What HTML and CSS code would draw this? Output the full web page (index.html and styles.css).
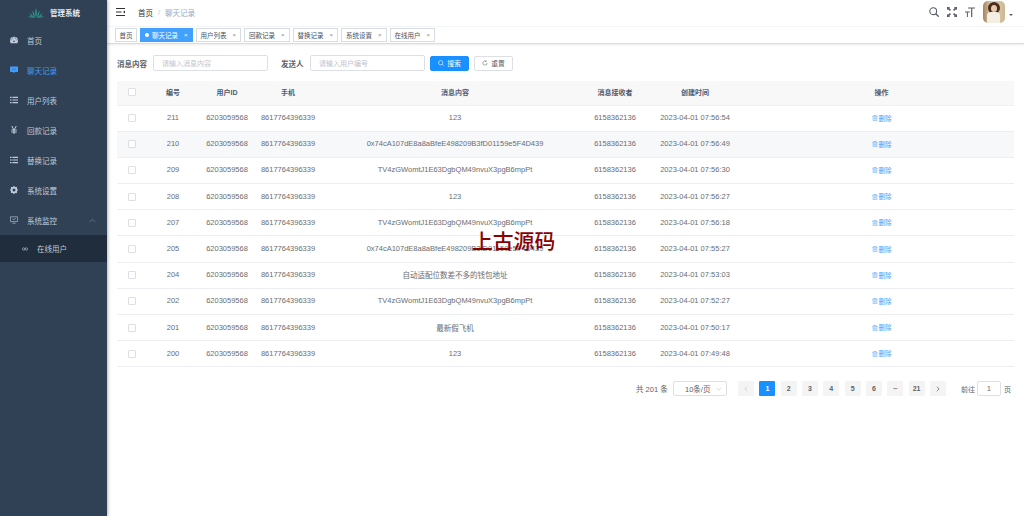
FILE: index.html
```html
<!DOCTYPE html>
<html lang="zh-CN">
<head>
<meta charset="utf-8">
<title>聊天记录</title>
<link rel="stylesheet" href="styles.css">
</head>
<body>
<svg class="defs" aria-hidden="true"><symbol id="trash" viewBox="0 0 8 8"><path d="M.5 1.500h7M3 1.500V.5h2v1M1.500 1.500v6h5v-6M3.200 3v3M4.800 3v3" fill="none" stroke="#409eff" stroke-width=".7"/></symbol></svg>
<div class="app">
  <aside class="side">
    <div class="logo">
      <svg class="logo-ico" viewBox="0 0 16 10"><path d="M8 10C7 6 7 3 8 0c1 3 1 6 0 10zM7 10C5 7 4.500 5 4.500 2.500 6 5 7 7 7 10zM9 10c2-3 2.500-5 2.500-7.500C10 5 9 7 9 10zM6.500 10C4 8.500 2.500 7.500 1 5.500c2.500 1 4.500 2.500 5.500 4.500zM9.500 10c2.500-1.500 4-2.500 5.500-4.500-2.500 1-4.500 2.500-5.500 4.500zM6 10.000C4 9.800 2 9.300 0 8c2.500 0 4.500.8 6 2zM10 10c2-.2 4-.7 6-2-2.500 0-4.500.8-6 2z"/></svg>
      <span class="logo-text">管理系统</span>
    </div>
    <nav class="menu">
      <div class="mi"><svg class="ic" viewBox="0 0 10 8"><path d="M5 0a5 5 0 0 0-5 5c0 1 .3 2 .8 3h8.400c.5-1 .8-2 .8-3a5 5 0 0 0-5-5z"/><circle cx="5" cy="5.500" r="1" fill="#304156"/><path d="M3.300 0v3M6.700 0v3M.5 3.500l2 .5M9.500 3.500l-2 .5" stroke="#304156" stroke-width=".5"/></svg><span>首页</span></div>
      <div class="mi on"><svg class="ic" viewBox="0 0 10 9"><path d="M1 0h8a1 1 0 0 1 1 1v5a1 1 0 0 1-1 1H6L5 9 4 7H1a1 1 0 0 1-1-1V1a1 1 0 0 1 1-1z"/><path d="M2.500 3.500h5" stroke="#304156" stroke-width=".8" stroke-dasharray="1 1"/></svg><span>聊天记录</span></div>
      <div class="mi"><svg class="ic" viewBox="0 0 10 8"><path d="M0 0h2v1.400H0zM3 0h7v1.400H3zM0 3.300h2v1.400H0zM3 3.300h7v1.400H3zM0 6.600h2V8H0zM3 6.600h7V8H3z"/></svg><span>用户列表</span></div>
      <div class="mi"><svg class="ic" viewBox="0 0 10 10"><path d="M1.500 0h1.400L5 4l2.100-4h1.400L6 4.500h2.500v1H5.700V7h2.800v1H5.700v2H4.300V8H1.500V7h2.800V5.500H1.500v-1H4z"/></svg><span>回款记录</span></div>
      <div class="mi"><svg class="ic" viewBox="0 0 10 8"><path d="M0 0h2v1.400H0zM3 0h7v1.400H3zM0 3.300h2v1.400H0zM3 3.300h7v1.400H3zM0 6.600h2V8H0zM3 6.600h7V8H3z"/></svg><span>替换记录</span></div>
      <div class="mi"><svg class="ic" viewBox="0 0 10 10"><circle cx="5" cy="5" r="3" fill="none" stroke="#bfcbd9" stroke-width="2.200"/><path d="M5 0v2M5 8v2M0 5h2M8 5h2M1.500 1.500l1.500 1.500M7 7l1.500 1.500M8.500 1.500L7 3M3 7L1.500 8.500" stroke="#bfcbd9" stroke-width="1.500"/></svg><span>系统设置</span></div>
      <div class="mi"><svg class="ic" viewBox="0 0 10 9"><path d="M.5.500h9v6h-9zM3 8.500h4M3.200 3l1.500 1.500L7 2" fill="none" stroke="#bfcbd9" stroke-width=".8"/></svg><span>系统监控</span><svg class="arrow" viewBox="0 0 8 5"><path d="M1 4l3-3 3 3" fill="none" stroke="#6f7f91" stroke-width=".9"/></svg></div>
      <div class="mi sub"><svg class="ic-sub" viewBox="0 0 10 6"><path d="M3 .8a2.200 2.200 0 0 0 0 4.400c1 0 1.500-.7 2-2.200S6 .8 7 .8a2.200 2.200 0 0 1 0 4.400c-1 0-1.500-.7-2-2.200S4 .8 3 .8z" fill="none" stroke="#bfcbd9" stroke-width="1"/></svg><span>在线用户</span></div>
    </nav>
  </aside>
  <main class="main">
    <header class="top">
      <svg class="ham" viewBox="0 0 9 8"><path d="M0 0h9v1.100H0zM0 3.400h5.500v1.200H0zM0 6.900h9V8H0zM9 2.500v3L7 4z"/></svg>
      <div class="crumb"><span class="c1">首页</span><span class="sep">/</span><span class="c2">聊天记录</span></div>
      <div class="tools">
        <svg class="tool" viewBox="0 0 10 10"><circle cx="4.200" cy="4.200" r="3.400" fill="none" stroke="#5a5e66" stroke-width="1.100"/><path d="M6.800 6.800L9.700 9.700" stroke="#5a5e66" stroke-width="1.300"/></svg>
        <svg class="tool" viewBox="0 0 10 10"><path d="M0 0h3L2.200 1 4 2.800 2.800 4 1 2.200 0 3zM10 0v3L9 2.200 7.200 4 6 2.800 7.800 1 7 0zM0 10V7l1 .8L2.800 6 4 7.200 2.200 9 3 10zM10 10H7l.8-1L6 7.200 7.200 6 9 7.800l1-.8z" fill="#5a5e66"/></svg>
        <svg class="tool" viewBox="0 0 10 10"><path d="M3 .5h7v1.100H7.300V10H6.100V1.600H3zM0 4.500h4.800v1H2.900V10H1.900V5.500H0z" fill="#5a5e66"/></svg>
        <div class="avatar"><div class="hair"></div><div class="face"></div><div class="dress"></div></div>
        <span class="caret"></span>
      </div>
    </header>
    <div class="tags">
      <span class="tag home">首页</span>
      <span class="tag act"><i class="dot"></i>聊天记录<b>×</b></span>
      <span class="tag">用户列表<b>×</b></span>
      <span class="tag">回款记录<b>×</b></span>
      <span class="tag">替换记录<b>×</b></span>
      <span class="tag">系统设置<b>×</b></span>
      <span class="tag">在线用户<b>×</b></span>
    </div>
    <section class="content">
      <form class="filter">
        <label class="lb">消息内容</label><input class="inp" placeholder="请输入消息内容">
        <label class="lb lb2">发送人</label><input class="inp" placeholder="请输入用户编号">
        <button type="button" class="btn pri"><svg class="bi" viewBox="0 0 10 10"><circle cx="4.500" cy="4.500" r="3.600" fill="none" stroke="#fff" stroke-width="1"/><path d="M7 7l2.500 2.500" stroke="#fff"/></svg>搜索</button>
        <button type="button" class="btn"><svg class="bi" viewBox="0 0 10 10"><path d="M8.500 5A3.500 3.500 0 1 1 7 2.200M7 .5v2H5" fill="none" stroke="#606266" stroke-width=".9"/></svg>重置</button>
      </form>
      <table class="tb">
        <colgroup><col class="c-a"><col class="c-b"><col class="c-c"><col class="c-d"><col class="c-e"><col class="c-f"><col class="c-g"><col></colgroup>
        <thead><tr><th><i class="cb"></i></th><th>编号</th><th>用户ID</th><th>手机</th><th>消息内容</th><th>消息接收者</th><th>创建时间</th><th>操作</th></tr></thead>
        <tbody>
          <tr><td><i class="cb"></i></td><td>211</td><td>6203059568</td><td>8617764396339</td><td>123</td><td>6158362136</td><td>2023-04-01 07:56:54</td><td class="op"><svg class="tr"><use href="#trash"/></svg>删除</td></tr>
          <tr class="alt"><td><i class="cb"></i></td><td>210</td><td>6203059568</td><td>8617764396339</td><td>0x74cA107dE8a8aBfeE498209B3fD01159e5F4D439</td><td>6158362136</td><td>2023-04-01 07:56:49</td><td class="op"><svg class="tr"><use href="#trash"/></svg>删除</td></tr>
          <tr><td><i class="cb"></i></td><td>209</td><td>6203059568</td><td>8617764396339</td><td>TV4zGWomtJ1E63DgbQM49nvuX3pgB6mpPt</td><td>6158362136</td><td>2023-04-01 07:56:30</td><td class="op"><svg class="tr"><use href="#trash"/></svg>删除</td></tr>
          <tr><td><i class="cb"></i></td><td>208</td><td>6203059568</td><td>8617764396339</td><td>123</td><td>6158362136</td><td>2023-04-01 07:56:27</td><td class="op"><svg class="tr"><use href="#trash"/></svg>删除</td></tr>
          <tr><td><i class="cb"></i></td><td>207</td><td>6203059568</td><td>8617764396339</td><td>TV4zGWomtJ1E63DgbQM49nvuX3pgB6mpPt</td><td>6158362136</td><td>2023-04-01 07:56:18</td><td class="op"><svg class="tr"><use href="#trash"/></svg>删除</td></tr>
          <tr><td><i class="cb"></i></td><td>205</td><td>6203059568</td><td>8617764396339</td><td>0x74cA107dE8a8aBfeE498209B3fD01159e5F4D439</td><td>6158362136</td><td>2023-04-01 07:55:27</td><td class="op"><svg class="tr"><use href="#trash"/></svg>删除</td></tr>
          <tr><td><i class="cb"></i></td><td>204</td><td>6203059568</td><td>8617764396339</td><td>自动适配位数差不多的钱包地址</td><td>6158362136</td><td>2023-04-01 07:53:03</td><td class="op"><svg class="tr"><use href="#trash"/></svg>删除</td></tr>
          <tr><td><i class="cb"></i></td><td>202</td><td>6203059568</td><td>8617764396339</td><td>TV4zGWomtJ1E63DgbQM49nvuX3pgB6mpPt</td><td>6158362136</td><td>2023-04-01 07:52:27</td><td class="op"><svg class="tr"><use href="#trash"/></svg>删除</td></tr>
          <tr><td><i class="cb"></i></td><td>201</td><td>6203059568</td><td>8617764396339</td><td>最新假飞机</td><td>6158362136</td><td>2023-04-01 07:50:17</td><td class="op"><svg class="tr"><use href="#trash"/></svg>删除</td></tr>
          <tr><td><i class="cb"></i></td><td>200</td><td>6203059568</td><td>8617764396339</td><td>123</td><td>6158362136</td><td>2023-04-01 07:49:48</td><td class="op"><svg class="tr"><use href="#trash"/></svg>删除</td></tr>
        </tbody>
      </table>
      <div class="pager">
        <span class="total">共 201 条</span>
        <div class="size"><span>10条/页</span><svg class="chev" viewBox="0 0 8 5"><path d="M1 1l3 3 3-3" fill="none" stroke="#c0c4cc" stroke-width=".8"/></svg></div>
        <div class="pages">
          <span class="pg dis"><svg class="pa" viewBox="0 0 5 8"><path d="M4 1L1 4l3 3" fill="none" stroke="#c0c4cc"/></svg></span><span class="pg cur">1</span><span class="pg">2</span><span class="pg">3</span><span class="pg">4</span><span class="pg">5</span><span class="pg">6</span><span class="pg">•••</span><span class="pg">21</span><span class="pg"><svg class="pa" viewBox="0 0 5 8"><path d="M1 1l3 3-3 3" fill="none" stroke="#606266"/></svg></span>
        </div>
        <div class="jump"><span>前往</span><span class="jin">1</span><span>页</span></div>
      </div>
    </section>
  </main>
</div>
<div class="mark">上古源码</div>
</body>
</html>
```

FILE: styles.css
```css
* { box-sizing: border-box; }
html, body { margin: 0; height: 100%; overflow: hidden; background: #fff; }
body { font-family: "Liberation Sans", "Noto Sans CJK SC", sans-serif; font-size: 7.5px; color: #606266; }
.defs { display: none; }
.app { display: flex; height: 516px; }

.side { width: 107px; flex: none; background: #304156; box-shadow: 1px 0 3px rgba(0,21,41,.3); position: relative; z-index: 2; }
.logo { height: 25px; display: flex; align-items: center; padding-left: 28px; }
.logo-ico { width: 16px; height: 10px; fill: #2f9e8f; margin-right: 6px; }
.logo-text { color: #e8ecf0; font-size: 7.5px; font-weight: 700; }
.menu { display: flex; flex-direction: column; }
.mi { height: 30px; display: flex; align-items: center; padding-left: 10px; color: #bfcbd9; font-size: 7.5px; position: relative; }
.ic { width: 8px; height: 8px; fill: #bfcbd9; margin-right: 9px; flex: none; }
.on { color: #409eff; }
.on .ic { fill: #409eff; }
.arrow { width: 7px; height: 5px; position: absolute; right: 11px; top: 13px; }
.sub { height: 27px; background: #1f2d3d; padding-left: 22px; }
.ic-sub { width: 6px; height: 4px; margin-right: 9px; }

.main { flex: 1; min-width: 0; display: flex; flex-direction: column; }
.top { height: 26px; display: flex; align-items: center; padding: 0 14px 2px 9px; }
.ham { width: 9px; height: 8px; fill: #303133; }
.crumb { margin-left: 13px; display: flex; align-items: center; font-size: 7.500px; }
.c1 { color: #303133; }
.sep { margin: 0 5px; color: #c0c4cc; }
.c2 { color: #97a8be; }
.tools { margin-left: auto; display: flex; align-items: center; margin-right: -3px; }
.tool { width: 10px; height: 10px; margin-right: 8px; }
.avatar { width: 22px; height: 22px; border-radius: 5px; background: linear-gradient(90deg, #a8835c, #ded2ba 40%, #cdb892); position: relative; overflow: hidden; }
.hair { position: absolute; left: 5px; top: 1px; width: 12px; height: 12px; border-radius: 50%; background: #4a2c1c; }
.face { position: absolute; left: 8px; top: 4px; width: 6px; height: 7px; border-radius: 50%; background: #e9c9ae; }
.dress { position: absolute; left: 4px; top: 11px; width: 13px; height: 11px; border-radius: 4px 4px 0 0; background: #f4efe2; }
.caret { width: 0; height: 0; border: 2px solid transparent; border-top: 2px solid #5a5e66; margin: 8px 0 0 4px; }

.tags { height: 18px; display: flex; align-items: center; gap: 3px; padding: 0 0 0 8px; border-top: 1px solid #f4f5f7; border-bottom: 1px solid #d8dce5; box-shadow: 0 1px 2px rgba(0,0,0,.08); }
.tag { height: 14px; display: flex; align-items: center; padding: 0 4px; border: 1px solid #d8dce5; color: #495060; font-size: 6.500px; background: #fff; }
.home { padding: 0 3.500px; }
.tag b { font-weight: 400; font-size: 6px; margin-left: 6px; color: #8d9199; }
.act { background: #42a0ff; border-color: #42a0ff; color: #fff; }
.act b { color: #fff; }
.dot { width: 4px; height: 4px; border-radius: 50%; background: #fff; margin-right: 3px; }

.content { padding: 11px 10px 0; }
.filter { display: flex; align-items: center; height: 16px; }
.lb { color: #606266; font-weight: 700; font-size: 7.500px; width: 36px; flex: none; }
.lb2 { width: 29px; margin-left: 13px; }
.inp { width: 115px; height: 16px; border: 1px solid #dcdfe6; border-radius: 2px; padding: 0 8px; font: 7px "Liberation Sans", "Noto Sans CJK SC", sans-serif; outline: none; flex: none; }
.inp::placeholder { color: #c0c4cc; opacity: 1; }
.btn { height: 15px; width: 39px; margin-left: 5px; border: 1px solid #dcdfe6; border-radius: 2px; background: #fff; color: #606266; font: 6.800px "Liberation Sans", "Noto Sans CJK SC", sans-serif; display: flex; align-items: center; justify-content: center; padding: 0; }
.pri { background: #1890ff; border-color: #1890ff; color: #fff; }
.bi { width: 6px; height: 6px; margin-right: 3px; }

.tb { width: 897px; table-layout: fixed; border-collapse: collapse; margin-top: 10px; font-size: 7.500px; }
.c-a { width: 30px; } .c-b { width: 52px; } .c-c { width: 56px; } .c-d { width: 66px; }
.c-e { width: 268px; } .c-f { width: 52px; } .c-g { width: 108px; }
th { height: 24px; background: #f8f8f9; color: #515a6e; font-weight: 700; font-size: 7px; text-align: center; padding: 0 0 2px; border-bottom: 1px solid #eef0f4; }
td { height: 26.200px; text-align: center; padding: 0 0 1px; color: #6a6d72; border-bottom: 1px solid #ebeef5; white-space: nowrap; }
.alt td { background: #f7f8fa; }
.cb { display: inline-block; width: 8px; height: 8px; border: 1px solid #dcdfe6; border-radius: 1px; background: #fff; vertical-align: middle; }
td.op { color: #409eff; font-size: 6.500px; }
.tr { width: 6px; height: 6px; vertical-align: -0.5px; margin-right: 1px; }

.pager { display: flex; align-items: center; height: 15px; margin-top: 14px; padding-left: 519px; white-space: nowrap; }
.total { width: 37px; flex: none; }
.size { width: 54px; height: 15px; flex: none; border: 1px solid #dcdfe6; border-radius: 2px; display: flex; align-items: center; justify-content: space-between; padding: 0 4px 0 11px; }
.chev { width: 6px; height: 4px; }
.pages { display: flex; gap: 5.330px; margin-left: 11px; }
.pg { width: 16px; height: 15px; background: #f4f4f5; color: #606266; border-radius: 1px; display: flex; align-items: center; justify-content: center; font-weight: 700; font-size: 7px; flex: none; }
.pg:nth-child(8) { font-size: 4px; }
.pa { width: 4px; height: 6px; }
.dis { color: #c0c4cc; font-weight: 400; }
.cur { background: #1890ff; color: #fff; }
.jump { display: flex; align-items: center; margin-left: 15px; font-size: 7px; }
.jin { width: 24px; height: 15px; border: 1px solid #dcdfe6; border-radius: 2px; margin: 0 3px 0 2px; display: flex; align-items: center; justify-content: center; }

.mark { position: absolute; left: 472px; top: 225px; font: 500 20.800px/30px "Noto Sans CJK SC", sans-serif; color: #8b0000; z-index: 5; white-space: nowrap; }
```
